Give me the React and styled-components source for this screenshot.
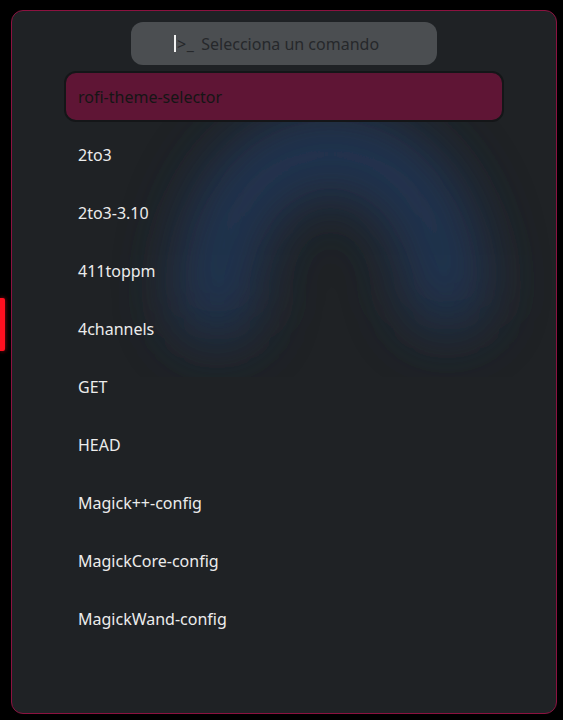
import React from "react";
import styled, { createGlobalStyle } from "styled-components";

const commands = [
  "rofi-theme-selector",
  "2to3",
  "2to3-3.10",
  "411toppm",
  "4channels",
  "GET",
  "HEAD",
  "Magick++-config",
  "MagickCore-config",
  "MagickWand-config",
];

const Global = createGlobalStyle`
  html, body {
    margin: 0;
    padding: 0;
    background: #000;
  }
  body {
    font-family: "Noto Sans", "Open Sans", sans-serif;
  }
`;

const Screen = styled.div`
  display: flex;
  width: 563px;
  height: 720px;
  background: #000;
`;

const Edge = styled.div`
  width: 11px;
  flex: none;
  padding-top: 298px;
  .pip {
    width: 5px;
    height: 53px;
    border-radius: 0 2px 2px 0;
    background: #ff1020;
    box-shadow: 0 0 4px rgba(255, 20, 30, 0.6);
  }
`;

const Window = styled.div`
  position: relative;
  margin-top: 10px;
  width: 546px;
  height: 704px;
  box-sizing: border-box;
  border: 1.5px solid #8c1240;
  border-radius: 12px;
  background: #1f2225;
  overflow: hidden;
  display: flex;
  flex-direction: column;
  align-items: center;
  padding-top: 11px;
`;

const Glow = styled.svg`
  position: absolute;
  left: 0;
  top: 0;
  pointer-events: none;
`;

const SearchBar = styled.div`
  position: relative;
  width: 306px;
  height: 43px;
  box-sizing: border-box;
  border-radius: 12px;
  background: #4b4e51;
  display: flex;
  align-items: center;
  padding-left: 43px;
  font-size: 16px;
  color: #26282b;
  .caret {
    width: 2px;
    height: 17px;
    background: #f2f2f2;
    margin-right: 1px;
  }
  .prompt {
    margin-right: 7px;
    letter-spacing: 0.5px;
  }
`;

const List = styled.div`
  position: relative;
  margin-top: 6px;
  width: 440px;
  display: flex;
  flex-direction: column;
  gap: 7px;
`;

const Row = styled.div`
  height: 51px;
  box-sizing: border-box;
  border-radius: 12px;
  border: 2px solid ${(p) => (p.$active ? "#141618" : "transparent")};
  background: ${(p) => (p.$active ? "#5f1535" : "transparent")};
  color: ${(p) => (p.$active ? "#151515" : "#ececec")};
  display: flex;
  align-items: center;
  padding-left: 12px;
  font-size: 16px;
`;

const App = () => {
  return (
    <>
      <Global />
      <Screen>
        <Edge>
          <div className="pip" />
        </Edge>
        <Window>
          <Glow width="546" height="704" viewBox="0 0 546 704">
            <defs>
              <filter id="soft" x="-50%" y="-50%" width="200%" height="200%">
                <feGaussianBlur stdDeviation="30" />
              </filter>
            </defs>
            <path
              d="M 205 290 C 200 95, 425 85, 435 280"
              fill="none"
              stroke="#21385a"
              strokeWidth="85"
              strokeLinecap="round"
              filter="url(#soft)"
              opacity="0.85"
            />
          </Glow>
          <SearchBar>
            <span className="caret" />
            <span className="prompt">&gt;_</span>
            <span>Selecciona un comando</span>
          </SearchBar>
          <List>
            {commands.map((c, i) => (
              <Row key={c} $active={i === 0}>
                {c}
              </Row>
            ))}
          </List>
        </Window>
      </Screen>
    </>
  );
};

export default App;
